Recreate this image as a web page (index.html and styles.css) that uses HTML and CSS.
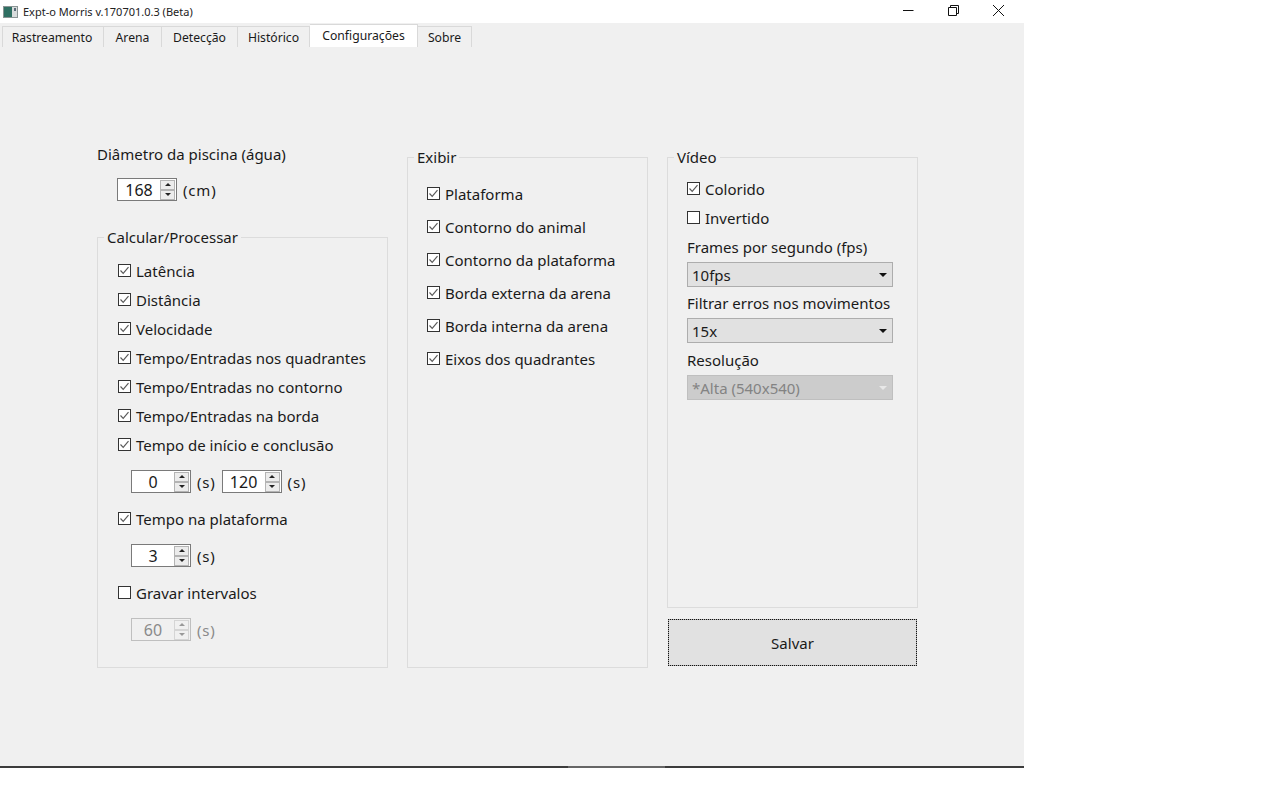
FILE: index.html
```html
<!DOCTYPE html>
<html lang="pt-BR">
<head>
    <meta charset="UTF-8">
    <title>Expt-o Morris</title>
    <link rel="stylesheet" href="styles.css">
</head>
<body>
    <svg class="defs" width="0" height="0">
        <symbol id="check" viewBox="0 0 13 13"><path d="M2.5 6.5 L5.2 9.3 L10.5 3.2" fill="none" stroke="#5a5a5a" stroke-width="1.2"/></symbol>
    </svg>
    <div class="window">
        <div class="titlebar">
            <svg class="app-icon" width="15" height="12" viewBox="0 0 15 12">
                <rect x="0.5" y="0.5" width="14" height="11" fill="#d8dcdc" stroke="#8a9494"/>
                <rect x="1" y="1" width="8" height="10" fill="#2f6f62"/>
                <rect x="11" y="2" width="2" height="3" fill="#5a6a78"/>
            </svg>
            <span class="app-title">Expt-o Morris v.170701.0.3 (Beta)</span>
            <div class="win-buttons">
                <svg class="win-btn" width="45" height="20" viewBox="0 0 45 20"><path d="M18 10.5 H28.5" stroke="#111" fill="none"/></svg>
                <svg class="win-btn" width="45" height="20" viewBox="0 0 45 20"><path d="M18.5 7.5 H26.5 V15.5 H18.5 Z M20.5 7 V5.5 H28.5 V13.5 H27" stroke="#111" fill="none"/></svg>
                <svg class="win-btn" width="45" height="20" viewBox="0 0 45 20"><path d="M18 5 L29 16 M29 5 L18 16" stroke="#111" fill="none"/></svg>
            </div>
        </div>

        <div class="tabs">
            <div class="tab t1">Rastreamento</div>
            <div class="tab t2">Arena</div>
            <div class="tab t3">Detecção</div>
            <div class="tab t4">Histórico</div>
            <div class="tab tab-active">Configurações</div>
            <div class="tab t6">Sobre</div>
        </div>

        <div class="content">
            <div class="col col-left">
                <div class="diameter-label">Diâmetro da piscina (água)</div>
                <div class="spin-row first-spin">
                    <span class="spin"><span class="spin-value">168</span><span class="spin-btns"><i class="up"></i><i class="down"></i></span></span>
                    <span class="unit">(cm)</span>
                </div>
                <fieldset class="group group-calc">
                    <legend>Calcular/Processar</legend>
                    <div class="check-row"><span class="box"><svg width="13" height="13"><use href="#check"/></svg></span>Latência</div>
                    <div class="check-row"><span class="box"><svg width="13" height="13"><use href="#check"/></svg></span>Distância</div>
                    <div class="check-row"><span class="box"><svg width="13" height="13"><use href="#check"/></svg></span>Velocidade</div>
                    <div class="check-row"><span class="box"><svg width="13" height="13"><use href="#check"/></svg></span>Tempo/Entradas nos quadrantes</div>
                    <div class="check-row"><span class="box"><svg width="13" height="13"><use href="#check"/></svg></span>Tempo/Entradas no contorno</div>
                    <div class="check-row"><span class="box"><svg width="13" height="13"><use href="#check"/></svg></span>Tempo/Entradas na borda</div>
                    <div class="check-row"><span class="box"><svg width="13" height="13"><use href="#check"/></svg></span>Tempo de início e conclusão</div>
                    <div class="spin-row nested">
                        <span class="spin"><span class="spin-value">0</span><span class="spin-btns"><i class="up"></i><i class="down"></i></span></span>
                        <span class="unit">(s)</span>
                        <span class="spin"><span class="spin-value">120</span><span class="spin-btns"><i class="up"></i><i class="down"></i></span></span>
                        <span class="unit">(s)</span>
                    </div>
                    <div class="check-row"><span class="box"><svg width="13" height="13"><use href="#check"/></svg></span>Tempo na plataforma</div>
                    <div class="spin-row nested">
                        <span class="spin"><span class="spin-value">3</span><span class="spin-btns"><i class="up"></i><i class="down"></i></span></span>
                        <span class="unit">(s)</span>
                    </div>
                    <div class="check-row"><span class="box"></span>Gravar intervalos</div>
                    <div class="spin-row nested disabled">
                        <span class="spin"><span class="spin-value">60</span><span class="spin-btns"><i class="up"></i><i class="down"></i></span></span>
                        <span class="unit">(s)</span>
                    </div>
                </fieldset>
            </div>

            <div class="col col-mid">
                <fieldset class="group group-show">
                    <legend>Exibir</legend>
                    <div class="check-row"><span class="box"><svg width="13" height="13"><use href="#check"/></svg></span>Plataforma</div>
                    <div class="check-row"><span class="box"><svg width="13" height="13"><use href="#check"/></svg></span>Contorno do animal</div>
                    <div class="check-row"><span class="box"><svg width="13" height="13"><use href="#check"/></svg></span>Contorno da plataforma</div>
                    <div class="check-row"><span class="box"><svg width="13" height="13"><use href="#check"/></svg></span>Borda externa da arena</div>
                    <div class="check-row"><span class="box"><svg width="13" height="13"><use href="#check"/></svg></span>Borda interna da arena</div>
                    <div class="check-row"><span class="box"><svg width="13" height="13"><use href="#check"/></svg></span>Eixos dos quadrantes</div>
                </fieldset>
            </div>

            <div class="col col-right">
                <fieldset class="group group-video">
                    <legend>Vídeo</legend>
                    <div class="check-row"><span class="box"><svg width="13" height="13"><use href="#check"/></svg></span>Colorido</div>
                    <div class="check-row"><span class="box"></span>Invertido</div>
                    <div class="field-label field-label-first">Frames por segundo (fps)</div>
                    <div class="combo"><span>10fps</span><i class="arrow"></i></div>
                    <div class="field-label">Filtrar erros nos movimentos</div>
                    <div class="combo"><span>15x</span><i class="arrow"></i></div>
                    <div class="field-label field-label-last">Resolução</div>
                    <div class="combo combo-disabled"><span>*Alta (540x540)</span><i class="arrow"></i></div>
                </fieldset>
                <button class="save-btn"><span>Salvar</span></button>
            </div>
        </div>
        <div class="bottom-edge"></div>
    </div>
</body>
</html>
```

FILE: styles.css
```css
/* Janela */
body {
    margin: 0;
    background-color: #ffffff;
    font-family: "Noto Sans", "Open Sans", sans-serif;
    font-size: 15px;
    color: #1a1a1a;
}

.defs {
    display: block;
    height: 0;
}

.window {
    width: 1024px;
    height: 768px;
    display: flex;
    flex-direction: column;
}

/* Barra de titulo */
.titlebar {
    height: 23px;
    display: flex;
    align-items: center;
    background-color: #ffffff;
    flex-shrink: 0;
}

.app-icon {
    margin-left: 3px;
    margin-right: 5px;
}

.app-title {
    font-size: 11px;
    color: #222;
}

.win-buttons {
    margin-left: auto;
    margin-right: 4px;
    display: flex;
    margin-top: -3px;
}

.win-btn {
    display: block;
}

/* Abas */
.tabs {
    height: 24px;
    flex-shrink: 0;
    display: flex;
    align-items: flex-end;
    padding-left: 2px;
    background-color: #f0f0f0;
    font-size: 12.2px;
}

.tab {
    height: 21px;
    box-sizing: border-box;
    border-top: 1px solid #d9d9d9;
    border-right: 1px solid #d9d9d9;
    background-color: #f0f0f0;
    display: flex;
    align-items: center;
    justify-content: center;
    padding-top: 1px;
}

.t1 {
    width: 102px;
    border-left: 1px solid #d9d9d9;
    padding-right: 2px;
}

.t2 { width: 58px; }
.t3 { width: 76px; }
.t4 { width: 72px; }
.t6 { width: 54px; }

.tab-active {
    width: 108px;
    height: 23px;
    background-color: #ffffff;
    padding-bottom: 3px;
}

/* Conteudo */
.content {
    flex: 1;
    display: flex;
    background-color: #f0f0f0;
    padding: 100px 0 0 97px;
    box-sizing: border-box;
}

.col {
    display: flex;
    flex-direction: column;
}

.col-left {
    width: 291px;
    margin-right: 19px;
}

.col-mid {
    width: 241px;
    margin-right: 19px;
}

.col-right {
    width: 251px;
}

.diameter-label {
    height: 20px;
    line-height: 20px;
    margin-top: -3px;
}

/* Grupos */
.group {
    margin: 0;
    padding: 0 0 0 19px;
    border: 1px solid #dcdcdc;
    box-sizing: border-box;
    min-width: 0;
}

.group legend {
    margin-left: -13px;
    padding: 0 3px;
    line-height: 20px;
}

.group-calc {
    height: 441px;
    margin-top: 26px;
    padding-top: 9px;
    padding-left: 20px;
}

.group-calc legend {
    margin-left: -14px;
}

.group-show {
    height: 521px;
    padding-top: 10px;
}

.group-show .check-row {
    height: 33px;
}

.group-video {
    height: 461px;
    padding-top: 7px;
}

/* Checkbox */
.check-row {
    height: 29px;
    display: flex;
    align-items: center;
}

.box {
    width: 13px;
    height: 13px;
    box-sizing: border-box;
    border: 1px solid #333;
    background-color: #fff;
    margin-right: 5px;
    flex-shrink: 0;
}

.box svg {
    display: block;
    margin: -1px;
}

/* Spinbox */
.spin-row {
    display: flex;
    align-items: center;
    gap: 6px;
}

.unit {
    letter-spacing: 0.8px;
}

.first-spin {
    margin-top: 14px;
    margin-left: 20px;
    height: 23px;
}

.nested {
    height: 23px;
    margin-left: 13px;
    margin-top: 11px;
    margin-bottom: 11px;
}

.spin {
    width: 60px;
    height: 23px;
    box-sizing: border-box;
    border: 1px solid #7a7a7a;
    background-color: #fff;
    display: flex;
    align-items: center;
}

.spin-value {
    flex: 1;
    text-align: center;
    font-size: 16px;
}

.spin-btns {
    width: 15px;
    margin-right: 1px;
    display: flex;
    flex-direction: column;
}

.spin-btns i {
    height: 10px;
    box-sizing: border-box;
    border: 1px solid #b4b4b4;
    background-color: #ececec;
    display: flex;
    align-items: center;
    justify-content: center;
}

.spin-btns i::after {
    content: "";
    border-left: 3px solid transparent;
    border-right: 3px solid transparent;
}

.up::after {
    border-bottom: 3px solid #222;
}

.down::after {
    border-top: 3px solid #222;
}

.disabled {
    color: #8a8a8a;
}

.disabled .spin {
    border-color: #bfbfbf;
    background-color: #f0f0f0;
}

.disabled .spin-btns i {
    border-color: #d5d5d5;
    background-color: #f0f0f0;
}

.disabled .up::after {
    border-bottom-color: #999;
}

.disabled .down::after {
    border-top-color: #999;
}

/* Combos */
.field-label {
    height: 28px;
    line-height: 26px;
}

.field-label-first {
    margin-top: 2px;
}

.field-label-last {
    height: 29px;
    line-height: 28px;
}

.combo {
    width: 206px;
    height: 25px;
    box-sizing: border-box;
    border: 1px solid #adadad;
    background-color: #e1e1e1;
    display: flex;
    align-items: center;
    padding: 0 5px 0 4px;
    margin-bottom: 3px;
}

.arrow {
    margin-left: auto;
    border-left: 4px solid transparent;
    border-right: 4px solid transparent;
    border-top: 4px solid #111;
}

.combo-disabled {
    background-color: #cccccc;
    border-color: #bfbfbf;
    color: #838383;
}

.combo-disabled .arrow {
    border-top-color: #e8e8e8;
}

/* Botao salvar */
.save-btn {
    width: 249px;
    height: 47px;
    margin: 11px 0 0 1px;
    border: 1px solid #adadad;
    background-color: #e1e1e1;
    font-family: inherit;
    font-size: 15px;
    color: #1a1a1a;
    outline: 1px dotted #111;
    outline-offset: -1px;
}

/* Borda inferior */
.bottom-edge {
    height: 2px;
    flex-shrink: 0;
    background: linear-gradient(to right, #3c3c3c 568px, #666 568px, #666 665px, #3c3c3c 665px);
}
```
